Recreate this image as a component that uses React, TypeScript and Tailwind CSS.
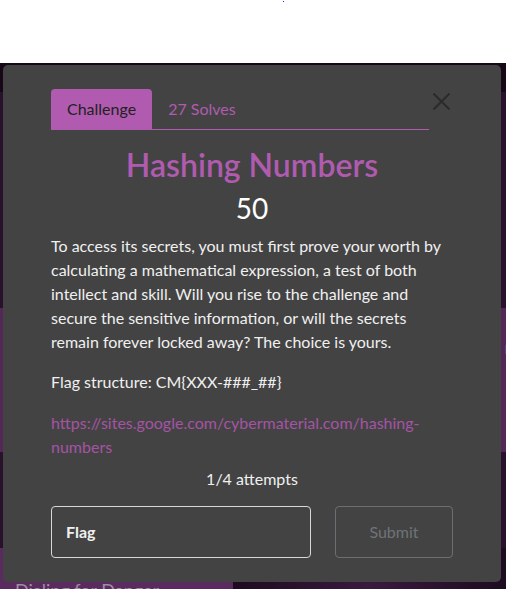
import React from "react";

export default function App() {
  return (
    <div className="w-[506px] h-[589px] overflow-hidden bg-white" style={{ fontFamily: "Lato, 'Open Sans', sans-serif" }}>
      <div className="h-[63px] bg-white relative">
        <div className="absolute left-[283px] top-[1px] w-[1px] h-[1px] bg-[#2020ff]" />
      </div>
      <div className="relative h-[526px] bg-[#27112b] overflow-hidden">
        <div className="h-[29px] bg-[#160816]" />
        <div className="h-[216px]" />
        <div className="flex gap-4 h-[144px]">
          <div className="flex-1 bg-[#532857]" />
          <div className="flex-1 bg-[#532857] flex items-start justify-end pt-[27px]">
            <span className="text-[17px] text-[#8f7d92] mr-[-12px]">ni</span>
          </div>
        </div>
        <div className="h-[96px]" />
        <div className="flex h-[60px]">
          <div className="w-[233px] bg-[#5a2b5e] pl-[15px] pt-[30px] text-[18px] leading-[24px] text-[#9e8ea1]">Dialing for Danger</div>
          <div className="flex-1 bg-gradient-to-r from-[#1d0b20] via-[#3a1a3e] to-[#1d0b20]" />
        </div>

        <div className="absolute left-[3px] top-[2px] w-[498px] rounded-[5px] bg-[#434343] px-12 pt-6 pb-6">
          <div className="flex items-start">
            <div className="flex-1 flex border-b border-[#b05bb0]">
              <div className="h-[40px] px-4 flex items-center bg-[#b05bb0] rounded-t-[4px] text-[16px] text-[#222222]">Challenge</div>
              <div className="h-[40px] px-4 flex items-center text-[16px] text-[#b05bb0]">27 Solves</div>
            </div>
            <div className="w-[24px] h-[24px] flex items-center justify-center">
              <svg width="17" height="17" viewBox="0 0 17 17">
                <path d="M0.5 0.5 L16.5 16.5 M16.5 0.5 L0.5 16.5" stroke="#2b2b2b" strokeWidth="2" />
              </svg>
            </div>
          </div>
          <div className="text-center text-[32px] leading-[38px] font-semibold text-[#b05bb0] mt-[16px]">Hashing Numbers</div>
          <div className="text-center text-[28px] leading-[34px] text-white mt-[7px]">50</div>
          <p className="text-[16px] leading-[24px] text-[#f0f0f0] mt-[9px]">
            To access its secrets, you must first prove your worth by calculating a mathematical expression, a test of both intellect and skill. Will you rise to the challenge and secure the sensitive information, or will the secrets remain forever locked away? The choice is yours.
          </p>
          <p className="text-[16px] leading-[24px] text-[#f0f0f0] mt-[16px]">Flag structure: CM{"{"}XXX-###_##{"}"}</p>
          <p className="text-[16px] leading-[24px] text-[#a653a6] mt-[17px] pr-[30px] break-words">
            https://sites.google.com/cybermaterial.com/hashing-numbers
          </p>
          <div className="text-center text-[16px] leading-[24px] text-[#f0f0f0] mt-[8px]">1/4 attempts</div>
          <div className="flex gap-6 mt-[15px]">
            <div className="w-[260px] h-[52px] rounded-[4px] border border-[#d8d8d8] flex items-center px-[14px] text-[16px] font-bold text-[#f0f0f0]">Flag</div>
            <div className="w-[118px] h-[52px] rounded-[4px] border border-[#6b6e72] flex items-center justify-center text-[16px] text-[#6f7378]">Submit</div>
          </div>
        </div>
      </div>
    </div>
  );
}
